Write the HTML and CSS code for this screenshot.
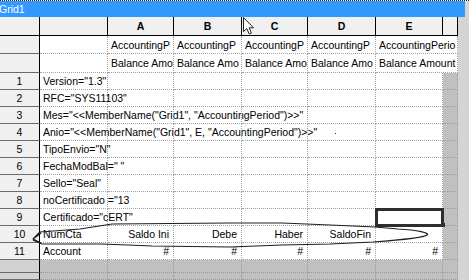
FILE: index.html
```html
<!DOCTYPE html>
<html lang="en">

<head>
    <meta charset="UTF-8">
    <title>Grid1</title>
    <link rel="stylesheet" href="styles.css">
</head>

<body>
    <div class="window">
        <!-- title bar -->
        <div class="top">
            <div class="titlebar"><span class="title">Grid1</span></div>
            <div class="title-end"></div>
        </div>

        <div class="body">
            <div class="sheet">
                <!-- column letters -->
                <div class="c hd"></div>
                <div class="c hd"></div>
                <div class="c hd">A</div>
                <div class="c hd">B</div>
                <div class="c hd">C</div>
                <div class="c hd">D</div>
                <div class="c hd">E</div>
                <div class="c hd"></div>

                <!-- column titles -->
                <div class="c rh"></div>
                <div class="c"></div>
                <div class="c clip">AccountingP</div>
                <div class="c clip">AccountingP</div>
                <div class="c clip">AccountingP</div>
                <div class="c clip">AccountingP</div>
                <div class="c clip wide">AccountingPerio</div>

                <div class="c rh"></div>
                <div class="c"></div>
                <div class="c clip">Balance Amo</div>
                <div class="c clip">Balance Amo</div>
                <div class="c clip">Balance Amo</div>
                <div class="c clip">Balance Amo</div>
                <div class="c clip wide">Balance Amount</div>

                <!-- rows -->
                <div class="c rh">1</div>
                <div class="c">Version="1.3"</div>
                <div class="c"></div><div class="c"></div><div class="c"></div><div class="c"></div><div class="c"></div>
                <div class="c void"></div>

                <div class="c rh">2</div>
                <div class="c">RFC="SYS11103"</div>
                <div class="c"></div><div class="c"></div><div class="c"></div><div class="c"></div><div class="c"></div>
                <div class="c void"></div>

                <div class="c rh">3</div>
                <div class="c">Mes="&lt;&lt;MemberName("Grid1", "AccountingPeriod")&gt;&gt;"</div>
                <div class="c"></div><div class="c"></div><div class="c"></div><div class="c"></div><div class="c"></div>
                <div class="c void"></div>

                <div class="c rh">4</div>
                <div class="c">Anio="&lt;&lt;MemberName("Grid1", E, "AccountingPeriod")&gt;&gt;"</div>
                <div class="c"></div><div class="c"></div><div class="c"></div><div class="c"></div><div class="c"></div>
                <div class="c void"></div>

                <div class="c rh">5</div>
                <div class="c">TipoEnvio="N"</div>
                <div class="c"></div><div class="c"></div><div class="c"></div><div class="c"></div><div class="c"></div>
                <div class="c void"></div>

                <div class="c rh">6</div>
                <div class="c">FechaModBal=" "</div>
                <div class="c"></div><div class="c"></div><div class="c"></div><div class="c"></div><div class="c"></div>
                <div class="c void"></div>

                <div class="c rh">7</div>
                <div class="c">Sello="Seal"</div>
                <div class="c"></div><div class="c"></div><div class="c"></div><div class="c"></div><div class="c"></div>
                <div class="c void"></div>

                <div class="c rh">8</div>
                <div class="c">noCertificado ="13</div>
                <div class="c"></div><div class="c"></div><div class="c"></div><div class="c"></div><div class="c"></div>
                <div class="c void"></div>

                <div class="c rh">9</div>
                <div class="c">Certificado="cERT"</div>
                <div class="c"></div><div class="c"></div><div class="c"></div><div class="c"></div>
                <div class="c sel"></div>
                <div class="c void"></div>

                <div class="c rh">10</div>
                <div class="c">NumCta</div>
                <div class="c num">Saldo Ini</div>
                <div class="c num">Debe</div>
                <div class="c num">Haber</div>
                <div class="c num">SaldoFin</div>
                <div class="c"></div>
                <div class="c void"></div>

                <div class="c rh">11</div>
                <div class="c">Account</div>
                <div class="c num">#</div>
                <div class="c num">#</div>
                <div class="c num">#</div>
                <div class="c num">#</div>
                <div class="c num">#</div>
                <div class="c void"></div>

                <!-- empty area under the data -->
                <div class="c rh rh-void"></div>
                <div class="c void"></div><div class="c void"></div><div class="c void"></div><div class="c void"></div>
                <div class="c void"></div><div class="c void"></div><div class="c void"></div>

                <div class="c rh rh-void"></div>
                <div class="c void"></div><div class="c void"></div><div class="c void"></div><div class="c void"></div>
                <div class="c void"></div><div class="c void"></div><div class="c void"></div>
            </div>
            <div class="strip"></div>
        </div>

        <!-- hand drawn loop round row 10 -->
        <svg class="ink" width="469" height="280" viewBox="0 0 469 280">
            <path d="M41 233 L33 239 L41 243 M33 239 L40 232 L80 229 L112 224 L230 223 L282 223 L330 225 L375 227 L398 229 C418 230 430 233 427 235 C424 238 400 240 373 242 L330 244 L282 245 L230 247 L152 246 L128 245 L100 244 L60 244 L42 244 L33 240"
                fill="none" stroke="#1e1e1e" stroke-width="1.2" stroke-linejoin="round" />
            <rect x="335" y="133" width="1" height="1" fill="#333" />
        </svg>

        <!-- mouse pointer -->
        <svg class="cursor" width="13" height="19" viewBox="0 0 13 19">
            <path d="M0.5 0.5 L0.5 14.5 L3.8 11.6 L6.2 17 L8.4 16 L6.1 10.8 L10.5 10.8 Z"
                fill="#fff" stroke="#222" stroke-width="1" stroke-linejoin="round" />
        </svg>
    </div>
</body>

</html>
```

FILE: styles.css
```css
body {
    margin: 0;
    font-family: "Liberation Sans", Arial, sans-serif;
    font-size: 10.5px;
    color: #000;
    background-color: #fff;
    overflow: hidden;
}

.window {
    position: relative;
    width: 469px;
    height: 280px;
    display: flex;
    flex-direction: column;
}

/* title bar */
.top {
    display: flex;
    height: 17px;
    border-top: 1px dotted #222;
    box-sizing: border-box;
}

.titlebar {
    flex: 1;
    background-color: #3399ff;
    display: flex;
    align-items: center;
}

.title {
    color: #fff;
    margin-left: -1px;
}

.title-end {
    width: 4px;
    background-color: #d4d4d4;
}

.body {
    flex: 1;
    display: flex;
}

/* grid */
.sheet {
    display: grid;
    grid-template-columns: 40px 68px 66px 68px 66px 68px 67px 15px;
    grid-template-rows: 19px 18px 19px repeat(11, 17px) 13px 1fr;
    background-color: #fff;
}

.c {
    box-sizing: border-box;
    border-right: 1px dotted #a3a3a3;
    border-bottom: 1px dotted #a3a3a3;
    padding: 0 3px;
    display: flex;
    align-items: center;
    white-space: nowrap;
    min-width: 0;
}

.hd {
    background-color: #f0f0f0;
    border-right: 1px solid #000;
    border-bottom: 1px solid #000;
    justify-content: center;
    font-weight: bold;
}

.rh {
    background-color: #f0f0f0;
    border-right: 1px solid #000;
    border-bottom: 1px solid #6a6a6a;
    justify-content: center;
}

.rh-void {
    background-color: #d2d2d2;
}

.clip {
    overflow: hidden;
}

.wide {
    grid-column: span 2;
}

.num {
    justify-content: flex-end;
    padding-right: 4px;
}

.void {
    background-color: #c0c0c0;
    border-color: #9c9c9c;
}

/* selected cell */
.sel {
    position: relative;
    z-index: 1;
    outline: 3px solid #2e2e2e;
    outline-offset: -2px;
}

.sel::after {
    content: "";
    position: absolute;
    right: -3px;
    bottom: -2px;
    width: 4px;
    height: 4px;
    background-color: #2e2e2e;
}

.strip {
    flex: 1;
    background-color: #d4d4d4;
}

/* overlays */
.ink {
    position: absolute;
    top: 0;
    left: 0;
    z-index: 2;
    pointer-events: none;
}

.cursor {
    position: absolute;
    top: 17px;
    left: 243px;
    z-index: 3;
    pointer-events: none;
}
```
